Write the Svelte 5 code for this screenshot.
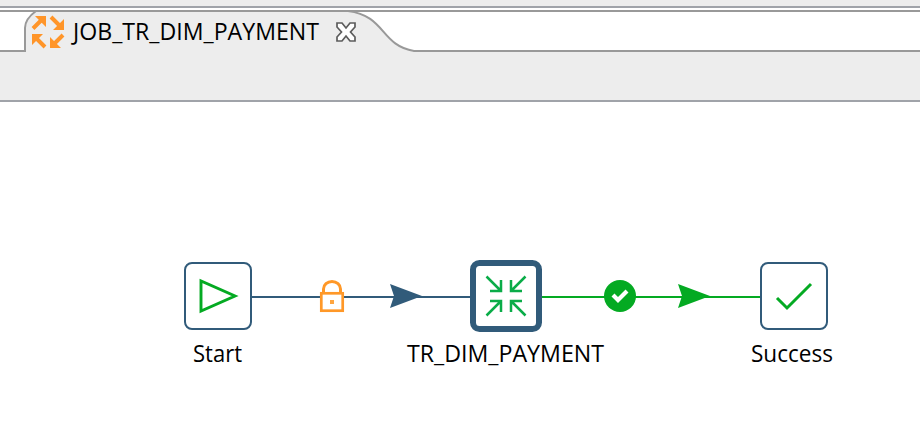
<script>
  const nodes = [
    { id: 'start', label: 'Start', x: 184, y: 262, size: 68, border: 2, textX: 193, textW: 49 },
    { id: 'transform', label: 'TR_DIM_PAYMENT', x: 470, y: 260, size: 72, border: 6, textX: 407, textW: 197 },
    { id: 'success', label: 'Success', x: 760, y: 262, size: 68, border: 2, textX: 751, textW: 82 }
  ];
</script>

<div class="editor">
  <div class="topbar"></div>
  <div class="tabs">
    <svg width="920" height="42" viewBox="0 10 920 42">
      <rect y="10" width="920" height="42" fill="#fff" />
      <path d="M24 52V28Q25 20 34 12H350C386 16 378 43 414 52Z" fill="#ededed" />
      <path d="M0 51H25V28Q25 19 36 11" class="edge" />
      <path d="M348 11C386 16 380 45 414 51H920" class="edge" />
      <path d="M0 11H920" class="edge" />
      <g fill="#ff9529" stroke="#ff9529">
        <path d="M35 16H46V27Z M64 19V30H53Z M32 34H43L32 45Z M50 37V48H61Z" stroke="none" />
        <path d="M33 28.5L42 19.5 M51 17L60 26 M45 47L36 38 M63 35L54 44" stroke-width="4" fill="none" />
      </g>
      <text x="73" y="40" textLength="246" lengthAdjust="spacingAndGlyphs">JOB_TR_DIM_PAYMENT</text>
      <path d="M337 23H342L346 28L350 23H355V27L350.5 32L355 37V41H350L346 36L342 41H337V37L341.5 32L337 27Z" fill="#fff" stroke="#5c5c5c" stroke-width="1.7" />
    </svg>
  </div>
  <div class="toolbar"></div>
  <svg class="canvas" width="920" height="334" viewBox="0 102 920 334">
    <path d="M252 297H470" stroke="#315b7a" stroke-width="2" />
    <path d="M542 297H760" stroke="#04aa22" stroke-width="2" />

    {#each nodes as n (n.id)}
      <rect
        x={n.x + n.border / 2}
        y={n.y + n.border / 2}
        width={n.size - n.border}
        height={n.size - n.border}
        rx={n.border === 6 ? 6.5 : 7}
        fill="#fff"
        stroke="#315b7a"
        stroke-width={n.border}
      />
      <text x={n.textX} y="362" textLength={n.textW} lengthAdjust="spacingAndGlyphs">{n.label}</text>
    {/each}

    <path d="M201 281V311L235 296Z" fill="none" stroke="#04aa22" stroke-width="2.9" />
    <path d="M777 298L787 308L811 284" fill="none" stroke="#04aa22" stroke-width="3" />
    <g fill="none" stroke="#0aac48" stroke-width="2.5">
      <path d="M486.5 276.5L501 291 M490 291H501V280" />
      <path d="M525.5 276.5L511 291 M522 291H511V280" />
      <path d="M486.5 315.5L501 301 M490 301H501V312" />
      <path d="M525.5 315.5L511 301 M522 301H511V312" />
    </g>

    <path d="M323.5 293V289A8.5 7.5 0 0 1 340.5 289V293" fill="#fff" stroke="#ff9828" stroke-width="3" />
    <rect x="321.3" y="293.3" width="21.4" height="17.4" fill="#fff" stroke="#ff9828" stroke-width="2.7" />
    <rect x="330" y="300" width="4" height="4" fill="#ffa53f" />

    <path d="M390 284L422 296L390 308L394 296Z" fill="#315b7a" />
    <path d="M678 284L710 296L678 308L682 296Z" fill="#04aa22" />
    <circle cx="620" cy="296" r="16" fill="#04aa22" />
    <path d="M613 295L618 300L627 291" fill="none" stroke="#fff" stroke-width="4.2" />
  </svg>
</div>

<style>
  :global(body) { margin: 0; background: #fff; }
  .editor { width: 920px; height: 436px; display: flex; flex-direction: column; overflow: hidden; background: #fff; }
  .topbar { box-sizing: border-box; height: 8px; margin-bottom: 2px; background: #ededed; border-bottom: 2px solid #a0a3a9; }
  .tabs { height: 42px; }
  .toolbar { box-sizing: border-box; height: 50px; background: #ededed; border-bottom: 2px solid #a0a3a9; }
  svg { display: block; }
  .edge { fill: none; stroke: #999; stroke-width: 2; }
  text { font-family: "Open Sans", "Noto Sans", sans-serif; font-size: 24.5px; fill: #000; }
  .canvas text { font-size: 24px; }
</style>
